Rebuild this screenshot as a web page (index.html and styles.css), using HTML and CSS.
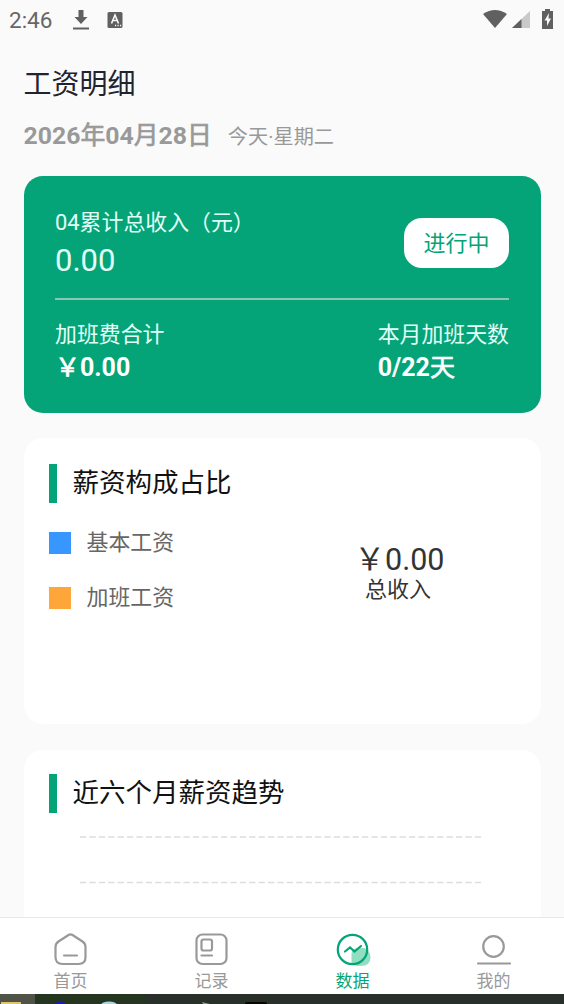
FILE: index.html
```html
<!DOCTYPE html>
<html lang="zh-CN">
<head>
<meta charset="utf-8">
<title>工资明细</title>
<link rel="stylesheet" href="styles.css">
</head>
<body>
<div class="screen">
  <header class="status">
    <span class="clock">2:46</span>
    <svg class="status-left" width="54" height="24" viewBox="0 0 54 24">
      <path d="M5.500 1h5v7h4L8 15 1.500 8h4zM0 18.500h16v2H0z"/>
      <rect x="34.500" y="3" width="15" height="16" rx="1.500"/>
      <path class="knock" d="M38.500 14.500 42 6l3.500 8.500M39.800 11.500h4.500M42 16.500h1.200M44.500 16.500h1.200M47 16.500h1.200"/>
    </svg>
    <svg class="status-right" width="74" height="24" viewBox="0 0 74 24">
      <path d="M0 7Q12-1 24 7L12 21z"/>
      <path class="faint" d="M47 4v17H29z"/>
      <path d="M38.500 12v9H29z"/>
      <path d="M59 4h3V2h5v2h3v18H59z"/>
      <path class="bolt" d="M66 6l-4.500 7.500h2.500V19l4-7.500h-2.500z"/>
    </svg>
  </header>
  <main class="content">
    <h1 class="title">工资明细</h1>
    <div class="date-row"><strong class="date">2026<span class="han">年</span>04<span class="han">月</span>28<span class="han">日</span></strong><span class="weekday">今天·星期二</span></div>

    <section class="summary">
      <div class="summary-top">
        <div>
          <div class="label">04累计总收入（元）</div>
          <div class="total">0.00</div>
        </div>
        <div class="pill">进行中</div>
      </div>
      <div class="summary-bottom">
        <div>
          <div class="label">加班费合计</div>
          <div class="value"><span class="han">￥</span>0.00</div>
        </div>
        <div>
          <div class="label">本月加班天数</div>
          <div class="value">0/22<span class="han">天</span></div>
        </div>
      </div>
    </section>

    <section class="card composition">
      <h2 class="heading">薪资构成占比</h2>
      <div class="composition-body">
        <ul class="legend">
          <li class="legend-item"><i class="swatch base"></i><span class="legend-text">基本工资</span></li>
          <li class="legend-item"><i class="swatch overtime"></i><span class="legend-text">加班工资</span></li>
        </ul>
        <div class="income">
          <div class="income-value">￥0.00</div>
          <div class="income-label">总收入</div>
        </div>
      </div>
    </section>

    <section class="card trend">
      <h2 class="heading">近六个月薪资趋势</h2>
      <svg class="grid" width="402" height="80" viewBox="0 0 402 80">
        <path d="M0 1h402M0 46.500h402"/>
      </svg>
    </section>
  </main>

  <nav class="tabs">
    <a class="tab">
      <svg class="icon" width="36" height="36" viewBox="0 0 36 36">
        <path d="M15.500 4q2-1.300 4 0l10 6.500q3 2 3 5.500V26q0 7-7 7h-16q-7 0-7-7V16q0-3.500 3-5.500zM11 24.500h13"/>
      </svg>
      <span>首页</span>
    </a>
    <a class="tab">
      <svg class="icon" width="36" height="36" viewBox="0 0 36 36">
        <rect x="2.500" y="3.500" width="30" height="29.500" rx="6"/>
        <rect x="7.500" y="8.500" width="10.500" height="11" rx="2"/>
        <path d="M7.500 24.500H18"/>
      </svg>
      <span>记录</span>
    </a>
    <a class="tab active">
      <svg class="icon" width="36" height="36" viewBox="0 0 36 36">
        <path class="shade" d="M16.500 33V23q0-6 7-6h6q6 3 6 9.500 0 8.500-10 8.500-6 0-9-2z"/>
        <circle cx="17.500" cy="18.500" r="14.700"/>
        <path d="M10 20.500l5-4 4.500 4 6.500-5.500"/>
      </svg>
      <span>数据</span>
    </a>
    <a class="tab">
      <svg class="icon" width="36" height="36" viewBox="0 0 36 36">
        <circle cx="17.500" cy="15.500" r="10.300"/>
        <path d="M2 32.500h32"/>
      </svg>
      <span>我的</span>
    </a>
  </nav>
  <svg class="taskbar" width="564" height="10" viewBox="0 0 564 10">
    <rect width="564" height="10" fill="#293029"/>
    <rect width="35" height="10" fill="#505348"/>
    <rect x="35" width="110" height="10" fill="#253620"/>
    <rect x="1" y="8" width="20" height="2" fill="#ddc66e"/>
    <ellipse cx="60" cy="11" rx="6" ry="3" fill="#1714d8"/>
    <ellipse cx="109" cy="11" rx="8" ry="3.500" fill="#a9d8dc"/>
    <path d="M202 8l8 2h-7z" fill="#8d948c"/>
    <rect x="245" y="8" width="22" height="4" rx="2" fill="#050505"/>
  </svg>
</div>
</body>
</html>
```

FILE: styles.css
```css
* { box-sizing: border-box; }

body {
  margin: 0;
  background: #fafafa;
  font-family: Roboto, "Noto Sans CJK SC", sans-serif;
}

h1, h2, ul { margin: 0; padding: 0; font-weight: 400; }

.screen {
  display: flex;
  flex-direction: column;
  width: 564px;
  height: 1004px;
  overflow: hidden;
}

.status {
  display: flex;
  align-items: center;
  flex: none;
  height: 40px;
  padding: 0 7px 0 9px;
  color: #666;
}
.clock { width: 64px; font-size: 22.500px; line-height: 40px; }
.status svg { fill: #606060; }
.status-left { margin-top: 1px; }
.status-right { margin: 0 0 2px auto; }
.status .knock { fill: none; stroke: #fafafa; stroke-width: 1.6; }
.status .faint { fill: #c9c9c9; }
.status .bolt { fill: #fafafa; }

.content {
  flex: 1;
  min-height: 0;
  overflow: hidden;
  padding: 24px 23.500px 0;
}
.title { height: 42px; font-size: 28px; line-height: 42px; color: #1f2430; }
.date-row {
  display: flex;
  align-items: baseline;
  gap: 16px;
  height: 70px;
  padding-top: 12px;
  line-height: 36px;
  color: #999;
}
.date { font-size: 24.800px; }
.han { font-weight: 400; -webkit-text-stroke: 0.7px currentColor; }
.weekday { font-size: 20.200px; }

.summary {
  height: 237px;
  padding: 31px 31.500px 0;
  border-radius: 19px;
  background: #05a478;
  color: #fff;
}
.summary-top {
  display: flex;
  justify-content: space-between;
  height: 93px;
  border-bottom: 2px solid #8cc5b1;
}
.label { font-size: 21.900px; line-height: 32px; color: #e2fff7; white-space: nowrap; }
.total { font-size: 31px; line-height: 43px; color: #e2fff7; }
.pill {
  width: 105px;
  height: 50px;
  margin-top: 11px;
  border-radius: 18px;
  background: #fff;
  color: #05a478;
  font-size: 22px;
  line-height: 52px;
  text-align: center;
}
.summary-bottom { display: flex; justify-content: space-between; padding-top: 19px; }
.value { font-size: 25px; font-weight: 700; line-height: 34px; }

.card {
  padding: 26px 25px 0;
  border-radius: 19px;
  background: #fff;
}
.composition { height: 286px; margin-top: 25px; }
.trend { height: 300px; margin-top: 26px; padding-top: 24px; }
.heading {
  height: 39px;
  padding-left: 16px;
  border-left: 8px solid #05a478;
  font-size: 26.500px;
  line-height: 38px;
  color: #111;
}
.composition-body { display: flex; justify-content: space-between; }
.legend { padding-top: 12px; list-style: none; }
.legend-item {
  display: flex;
  align-items: center;
  gap: 16px;
  height: 55px;
  font-size: 21.900px;
  color: #666;
}
.legend-text { padding-bottom: 4px; }
.swatch { width: 22px; height: 22px; }
.base { background: #3797ff; }
.overtime { background: #ffa63b; }
.income { width: 235px; padding-top: 38px; text-align: center; color: #333; }
.income-value { padding-left: 3px; font-size: 30.500px; line-height: 38px; }
.income-label { font-size: 22px; line-height: 22px; }
.grid {
  display: block;
  margin: 23px 0 0 31px;
  fill: none;
  stroke: #ddd;
  stroke-width: 1.5;
  stroke-dasharray: 6.300 3.100;
}

.tabs {
  display: flex;
  flex: none;
  height: 77px;
  border-top: 1px solid #e8e8e8;
  background: #fff;
}
.tab {
  display: flex;
  flex: 1;
  flex-direction: column;
  align-items: center;
  padding-top: 13px;
  color: #999;
  font-size: 17px;
  line-height: 28px;
}
.active { color: #05a478; }
.icon { flex: none; overflow: visible; fill: none; stroke: currentColor; stroke-width: 2.2; stroke-linecap: round; }
.icon .shade { fill: #91dfc0; stroke: none; }
.taskbar { display: block; flex: none; }
```
